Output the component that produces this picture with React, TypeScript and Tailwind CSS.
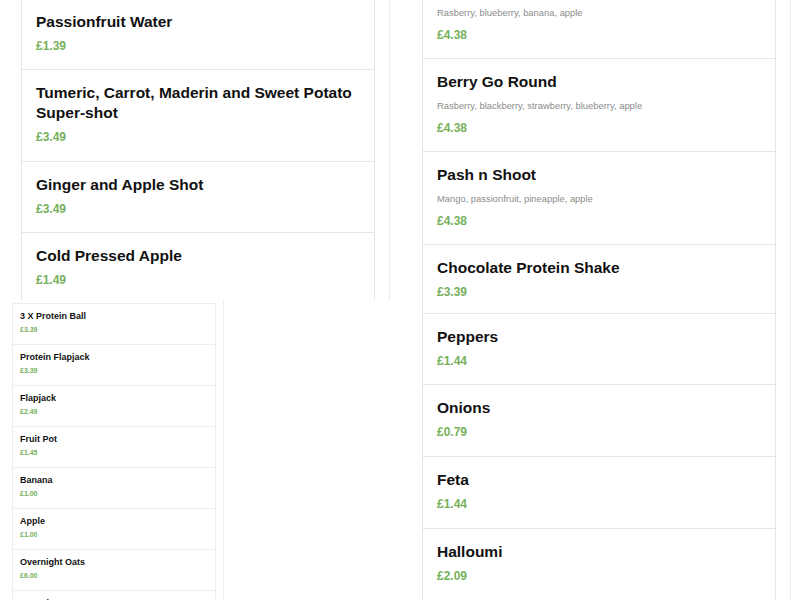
type Product = { name?: string; price: string; desc?: string; loose?: boolean };

const drinks: Product[] = [
  { name: "Passionfruit Water", price: "£1.39" },
  { name: "Tumeric, Carrot, Maderin and Sweet Potato Super-shot", price: "£3.49", loose: true },
  { name: "Ginger and Apple Shot", price: "£3.49" },
  { name: "Cold Pressed Apple", price: "£1.49" },
];

// first one is scrolled past its title
const smoothies: Product[] = [
  { desc: "Rasberry, blueberry, banana, apple", price: "£4.38" },
  { name: "Berry Go Round", desc: "Rasberry, blackberry, strawberry, blueberry, apple", price: "£4.38" },
  { name: "Pash n Shoot", desc: "Mango, passionfruit, pineapple, apple", price: "£4.38" },
  { name: "Chocolate Protein Shake", price: "£3.39" },
];

const extras: Product[] = [
  { name: "Peppers", price: "£1.44" },
  { name: "Onions", price: "£0.79", loose: true },
  { name: "Feta", price: "£1.44", loose: true },
  { name: "Halloumi", price: "£2.09", loose: true },
];

const snacks: Product[] = [
  { name: "3 X Protein Ball", price: "£3.39" },
  { name: "Protein Flapjack", price: "£3.39" },
  { name: "Flapjack", price: "£2.49" },
  { name: "Fruit Pot", price: "£1.45" },
  { name: "Banana", price: "£1.00" },
  { name: "Apple", price: "£1.00" },
  { name: "Overnight Oats", price: "£6.00" },
  { name: "Granola Pot", price: "£3.00" },
];

function MenuItem({ item }: { item: Product }) {
  return (
    <div
      className={`border-b border-[#e6e6e6] px-[14px] ${item.name ? "pt-[13px]" : "pt-[6px]"} ${
        item.loose ? "pb-[16px]" : "pb-[15px]"
      }`}
    >
      {item.name && (
        <div className="text-[15.5px] font-bold leading-[20px] text-[#111]">{item.name}</div>
      )}
      {item.desc && (
        <div
          className={`${
            item.name ? "mt-[7px]" : ""
          } text-[9.4px] leading-[14px] text-[#8c8c8c]`}
        >
          {item.desc}
        </div>
      )}
      <div
        className={`${
          item.desc ? "mt-[7px]" : "mt-[6px]"
        } text-[12px] font-bold leading-[16px] text-[#76b05a]`}
      >
        {item.price}
      </div>
    </div>
  );
}

function SmallItem({ item }: { item: Product }) {
  return (
    <div className="border-b border-[#ededed] px-[7px] pt-[6px] pb-[9px]">
      <div className="text-[9px] font-bold leading-[12px] text-[#111]">{item.name}</div>
      <div className="mt-[3px] text-[7px] font-bold leading-[10px] text-[#76b05a]">{item.price}</div>
    </div>
  );
}

export default function App() {
  return (
    <div className="grid h-[600px] w-[800px] grid-cols-2 grid-rows-2 overflow-hidden bg-white font-['Liberation_Sans',Arial,sans-serif]">
      {/* top left: drinks */}
      <div className="flex h-[300px] overflow-hidden">
        <div className="ml-[21px] w-[354px] shrink-0 border-x border-[#e6e6e6]">
          <div className="mt-[-1px]">
            {drinks.map((d) => (
              <MenuItem key={d.name} item={d} />
            ))}
          </div>
        </div>
        <div className="ml-[14px] border-l border-[#ececec]" />
      </div>

      {/* top right: smoothies */}
      <div className="flex h-[300px] overflow-hidden">
        <div className="ml-[22px] w-[354px] shrink-0 border-x border-[#e6e6e6]">
          {smoothies.map((d, i) => (
            <MenuItem key={i} item={d} />
          ))}
        </div>
        <div className="ml-[14px] border-l border-[#ececec]" />
      </div>

      {/* bottom left: snacks */}
      <div className="flex h-[300px] overflow-hidden">
        <div className="ml-[12px] mt-[3px] w-[204px] shrink-0 self-start border-x border-t border-[#ededed]">
          {snacks.map((s) => (
            <SmallItem key={s.name} item={s} />
          ))}
        </div>
        <div className="ml-[7px] border-l border-[#f0f0f0]" />
      </div>

      {/* bottom right: extras */}
      <div className="flex h-[300px] overflow-hidden">
        <div className="ml-[22px] w-[354px] shrink-0 border-x border-[#e6e6e6]">
          <div className="h-[14px] border-b border-[#e6e6e6]" />
          {extras.map((d) => (
            <MenuItem key={d.name} item={d} />
          ))}
        </div>
        <div className="ml-[14px] border-l border-[#ececec]" />
      </div>
    </div>
  );
}
